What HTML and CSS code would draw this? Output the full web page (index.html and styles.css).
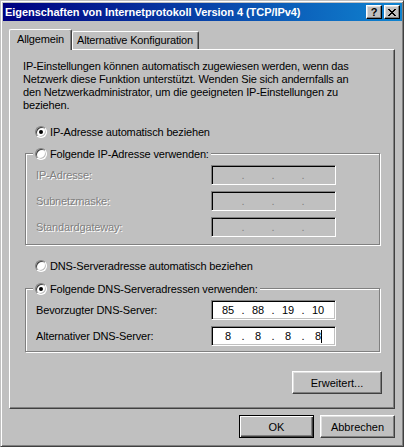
FILE: index.html
```html
<!DOCTYPE html>
<html lang="de">
<head>
    <meta charset="UTF-8">
    <title>Eigenschaften von Internetprotokoll Version 4 (TCP/IPv4)</title>
    <link rel="stylesheet" href="styles.css">
</head>
<body>

    <div class="window">
        <!-- Title bar -->
        <div class="titlebar">
            <span class="title">Eigenschaften von Internetprotokoll Version 4 (TCP/IPv4)</span>
            <button class="cap-btn help">?</button>
            <button class="cap-btn close">
                <svg width="8" height="7" viewBox="0 0 8 7" shape-rendering="crispEdges">
                    <path fill="#000" d="M0 0h2v1H0z M6 0h2v1H6z M1 1h2v1H1z M5 1h2v1H5z M2 2h4v1H2z M3 3h2v1H3z M2 4h4v1H2z M1 5h2v1H1z M5 5h2v1H5z M0 6h2v1H0z M6 6h2v1H6z"/>
                </svg>
            </button>
        </div>

        <div class="dialog">
            <!-- Tabs -->
            <div class="tabs">
                <div class="tab active">Allgemein</div>
                <div class="tab">Alternative Konfiguration</div>
            </div>

            <div class="panel">
                <p class="intro">IP-Einstellungen können automatisch zugewiesen werden, wenn das<br>
                    Netzwerk diese Funktion unterstützt. Wenden Sie sich andernfalls an<br>
                    den Netzwerkadministrator, um die geeigneten IP-Einstellungen zu<br>
                    beziehen.</p>

                <label class="radio-row"><span class="radio checked"></span>IP-Adresse automatisch beziehen</label>

                <fieldset class="group group-ip">
                    <legend><span class="radio"></span>Folgende IP-Adresse verwenden:</legend>
                    <div class="field-row disabled">
                        <span class="field-label">IP-Adresse:</span>
                        <span class="ip-box"><span class="seg"></span><span class="dot">.</span><span class="seg"></span><span class="dot">.</span><span class="seg"></span><span class="dot">.</span><span class="seg"></span></span>
                    </div>
                    <div class="field-row disabled">
                        <span class="field-label">Subnetzmaske:</span>
                        <span class="ip-box"><span class="seg"></span><span class="dot">.</span><span class="seg"></span><span class="dot">.</span><span class="seg"></span><span class="dot">.</span><span class="seg"></span></span>
                    </div>
                    <div class="field-row disabled">
                        <span class="field-label">Standardgateway:</span>
                        <span class="ip-box"><span class="seg"></span><span class="dot">.</span><span class="seg"></span><span class="dot">.</span><span class="seg"></span><span class="dot">.</span><span class="seg"></span></span>
                    </div>
                </fieldset>

                <label class="radio-row second"><span class="radio"></span>DNS-Serveradresse automatisch beziehen</label>

                <fieldset class="group group-dns">
                    <legend><span class="radio checked"></span>Folgende DNS-Serveradressen verwenden:</legend>
                    <div class="field-row">
                        <span class="field-label">Bevorzugter DNS-Server:</span>
                        <span class="ip-box"><span class="seg">85</span><span class="dot">.</span><span class="seg">88</span><span class="dot">.</span><span class="seg">19</span><span class="dot">.</span><span class="seg">10</span></span>
                    </div>
                    <div class="field-row">
                        <span class="field-label">Alternativer DNS-Server:</span>
                        <span class="ip-box"><span class="seg">8</span><span class="dot">.</span><span class="seg">8</span><span class="dot">.</span><span class="seg">8</span><span class="dot">.</span><span class="seg">8<span class="caret"></span></span></span>
                    </div>
                </fieldset>

                <div class="panel-actions">
                    <button class="btn wide">Erweitert...</button>
                </div>
            </div>

            <div class="dialog-actions">
                <button class="btn default">OK</button>
                <button class="btn">Abbrechen</button>
            </div>
        </div>
    </div>

</body>
</html>
```

FILE: styles.css
```css
body {
    margin: 0;
    background-color: #c0c0c0;
    font-family: "Liberation Sans", Arial, sans-serif;
    font-size: 11px;
    letter-spacing: -0.15px;
    color: #000;
}
.window {
    box-sizing: border-box;
    width: 404px;
    height: 447px;
    border: 1px solid;
    border-color: #c0c0c0 #404040 #404040 #c0c0c0;
    box-shadow: inset 1px 1px 0 #fff, inset -1px -1px 0 #808080;
    padding: 2px 1px 2px 2px;
    background-color: #c0c0c0;
}

/* Title bar */
.titlebar {
    display: flex;
    align-items: center;
    height: 18px;
    padding: 0 2px;
    background: linear-gradient(to right, #000080, #1084d0);
    color: #fff;
    font-weight: bold;
}
.title {
    flex: 1;
    white-space: nowrap;
    overflow: hidden;
    letter-spacing: -0.05px;
}
.cap-btn {
    box-sizing: border-box;
    width: 16px;
    height: 14px;
    padding: 0;
    display: flex;
    align-items: center;
    justify-content: center;
    background-color: #c0c0c0;
    border: 1px solid;
    border-color: #fff #000 #000 #fff;
    box-shadow: inset -1px -1px 0 #808080, inset 1px 1px 0 #dfdfdf;
    font: bold 11px "Liberation Sans", Arial, sans-serif;
    color: #000;
    line-height: 12px;
}
.cap-btn.close {
    margin-left: 2px;
}

/* Dialog body */
.dialog {
    padding: 8px 7px 0 6px;
}
.tabs {
    display: flex;
    align-items: flex-end;
    height: 20px;
}
.tab {
    box-sizing: border-box;
    height: 18px;
    padding: 0 5px 0 4px;
    border-left: 1px solid #fff;
    border-top: 1px solid #fff;
    border-right: 1px solid #404040;
    border-radius: 2px 2px 0 0;
    box-shadow: inset -1px 0 0 #808080;
    line-height: 17px;
    white-space: nowrap;
}
.tab.active {
    position: relative;
    height: 21px;
    margin-bottom: -1px;
    padding: 0 7px;
    line-height: 18px;
    background-color: #c0c0c0;
}
.panel {
    border: 1px solid;
    border-color: #fff #404040 #404040 #fff;
    box-shadow: inset -1px -1px 0 #808080;
    padding: 10px 12px 14px 13px;
}
.intro {
    margin: 0;
    line-height: 13px;
    white-space: nowrap;
}

/* Radio buttons */
.radio-row {
    display: flex;
    align-items: center;
    height: 13px;
    margin: 13px 0 0 12px;
}
.radio-row.second {
    margin-top: 14px;
}
.radio {
    box-sizing: border-box;
    width: 12px;
    height: 12px;
    margin-right: 3px;
    display: flex;
    align-items: center;
    justify-content: center;
    border: 1px solid;
    border-color: #808080 #fff #fff #808080;
    border-radius: 50%;
    background-color: #fff;
    box-shadow: inset 1px 1px 0 #404040, inset -1px -1px 0 #c0c0c0;
}
.radio.checked::after {
    content: "";
    width: 4px;
    height: 4px;
    border-radius: 50%;
    background-color: #000;
}

/* Group boxes */
.group {
    min-width: 0;
    margin: 9px 2px 0 2px;
    padding: 5px 0 7px 0;
    border: 1px solid #808080;
    box-shadow: 1px 1px 0 #fff, inset 1px 1px 0 #fff;
}
.group-dns {
    margin-top: 10px;
    padding-bottom: 5px;
}
.group legend {
    display: flex;
    align-items: center;
    height: 13px;
    margin-left: 7px;
    padding: 0 2px;
    background-color: #c0c0c0;
}
.field-row {
    display: flex;
    align-items: center;
    padding-left: 10px;
}
.field-row + .field-row {
    margin-top: 6px;
}
.field-label {
    width: 175px;
}
.field-row.disabled .field-label {
    color: #808080;
    text-shadow: 1px 1px 0 #fff;
}

/* IP address control */
.ip-box {
    box-sizing: border-box;
    width: 125px;
    height: 20px;
    display: flex;
    align-items: center;
    padding-left: 4px;
    border: 1px solid;
    border-color: #808080 #fff #fff #808080;
    box-shadow: inset 1px 1px 0 #000, inset -1px -1px 0 #c0c0c0;
    background-color: #fff;
}
.disabled .ip-box {
    background-color: #c0c0c0;
    color: #808080;
}
.ip-box .seg {
    width: 24px;
    text-align: center;
}
.ip-box .dot {
    width: 6px;
    text-align: center;
}
.caret {
    display: inline-block;
    width: 1px;
    height: 13px;
    margin-right: -1px;
    vertical-align: -3px;
    background-color: #000;
}

/* Buttons */
.btn {
    box-sizing: border-box;
    width: 75px;
    height: 23px;
    padding: 0;
    background-color: #c0c0c0;
    border: 1px solid;
    border-color: #fff #404040 #404040 #fff;
    box-shadow: inset -1px -1px 0 #808080, inset 1px 1px 0 #dfdfdf;
    font: 11px "Liberation Sans", Arial, sans-serif;
    color: #000;
}
.btn.wide {
    width: 90px;
}
.btn.default {
    border-color: #000;
    box-shadow: inset 1px 1px 0 #fff, inset -1px -1px 0 #404040, inset -2px -2px 0 #808080;
}
.panel-actions {
    display: flex;
    justify-content: flex-end;
    margin-top: 19px;
}
.dialog-actions {
    display: flex;
    justify-content: flex-end;
    gap: 6px;
    margin-top: 6px;
}
```
